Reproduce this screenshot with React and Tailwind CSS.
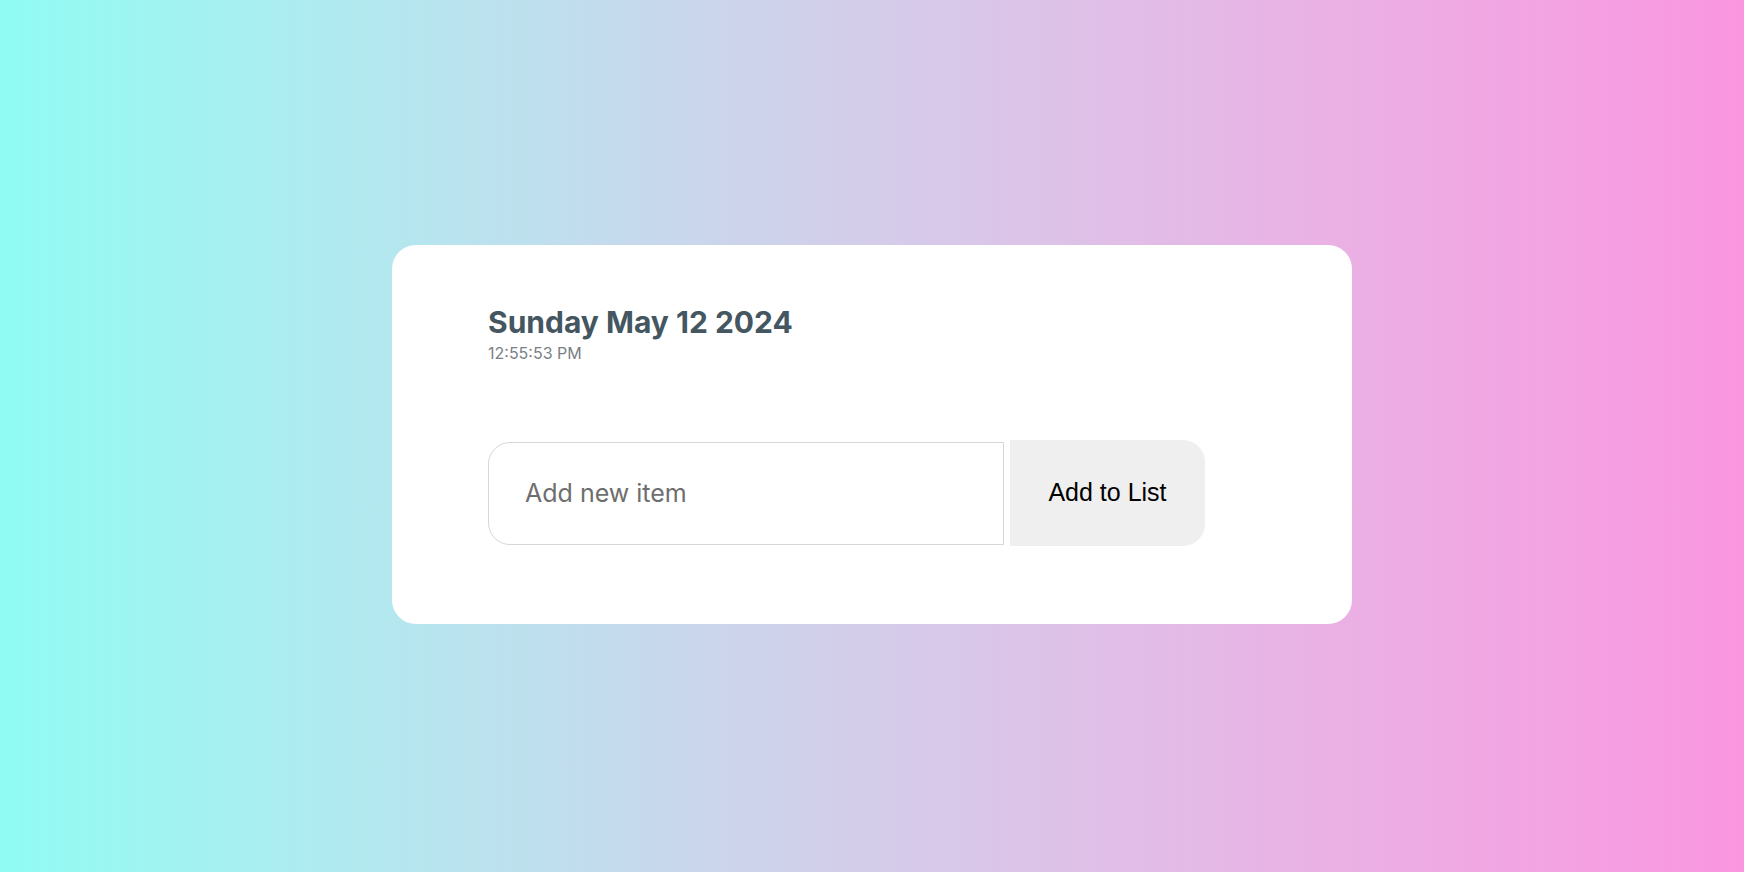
import React from 'react';

const App = () => (
  <div className="min-h-screen w-full flex items-center justify-center bg-gradient-to-r from-[#8ffcf3] to-[#fa96e0] font-['Inter',sans-serif]">
    <div className="w-[960px] h-[379px] bg-white rounded-[24px] px-24 pt-[59px] mb-[3px]">
      <h1 className="text-[30px] leading-[36px] font-bold text-[#44565f]">Sunday May 12 2024</h1>
      <p className="text-[16px] leading-[20px] text-[#7a7f85] mt-[3px]">12:55:53 PM</p>
      <div className="flex items-center mt-[77px]">
        <input
          type="text"
          placeholder="Add new item"
          className="w-[516px] h-[103px] border border-[#d6d6d6] rounded-l-[22px] pl-9 text-[25px] text-[#333] placeholder:text-[#6e6e6e] outline-none"
        />
        <button className="ml-[6px] w-[195px] h-[106px] bg-[#efefef] rounded-r-[22px] text-[25px] text-black font-['Liberation_Sans',Arial,sans-serif]">
          Add to List
        </button>
      </div>
    </div>
  </div>
);

export default App;
